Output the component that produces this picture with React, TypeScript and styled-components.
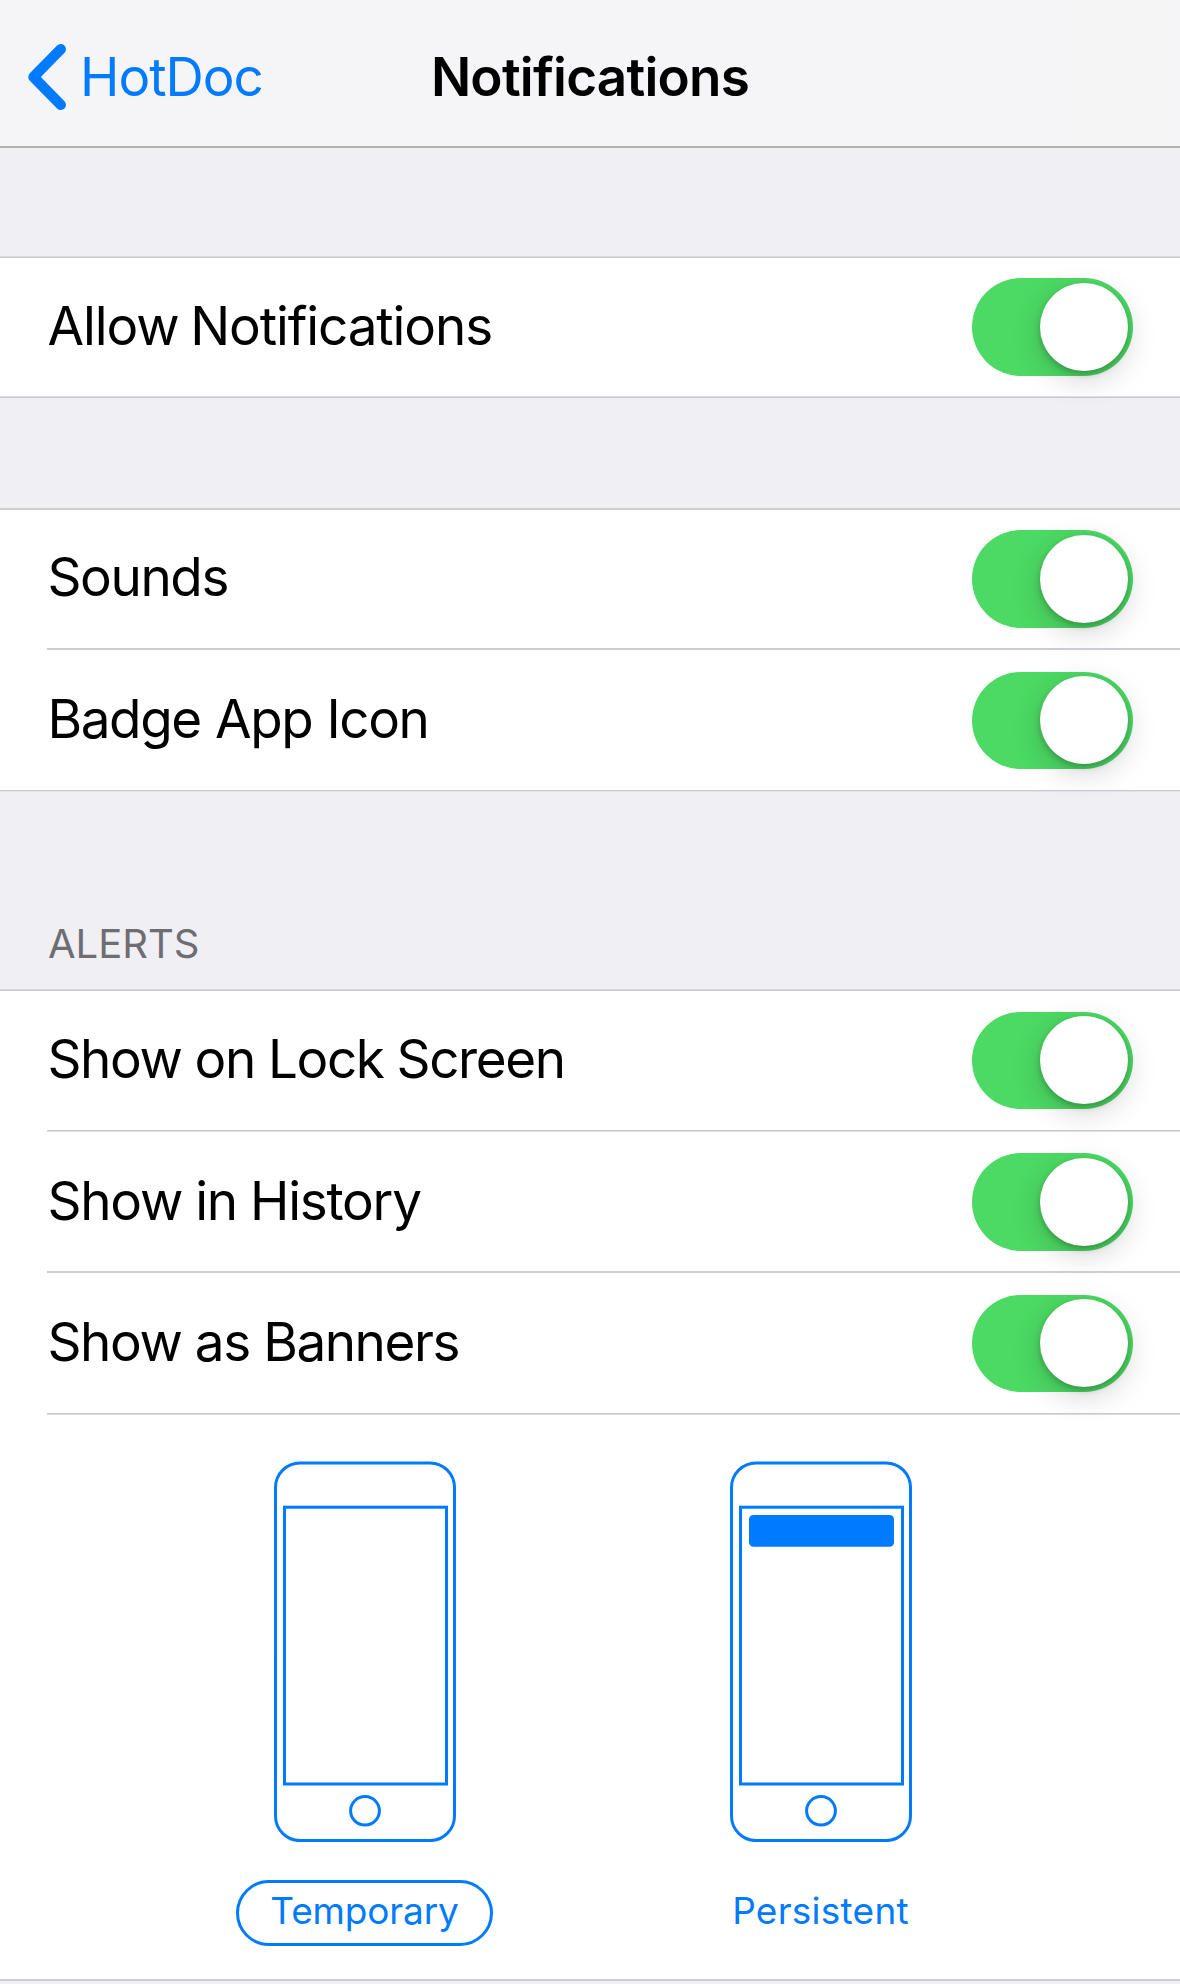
import React, { useState } from 'react';
import styled, { createGlobalStyle } from 'styled-components';

const blue = '#007aff';

const GlobalStyle = createGlobalStyle`
  body {
    margin: 0;
    background: #efeff4;
    font-family: Inter, Roboto, 'Liberation Sans', sans-serif;
    color: #000;
  }
`;

const Screen = styled.div`
  width: 1180px;
  height: 1984px;
  overflow: hidden;
  display: flex;
  flex-direction: column;
  background: #efeff4;
`;

const NavBar = styled.header`
  box-sizing: border-box;
  height: 148px;
  padding: 7px 28px 0;
  display: grid;
  grid-template-columns: 1fr auto 1fr;
  align-items: center;
  background: linear-gradient(90deg, #f5f5f7 0 1070px, #f5f5f5 1072px 1168px, #f5f5f7 1170px);
  border-bottom: 2px solid #b1b1b4;
`;

const BackLink = styled.a`
  display: flex;
  align-items: center;
  gap: 13px;
  color: ${blue};
  font-size: 53px;
  line-height: 64px;
  letter-spacing: -1px;
`;

const Title = styled.h1`
  margin: 0;
  font-size: 53px;
  font-weight: 600;
  line-height: 64px;
  letter-spacing: -0.76px;
`;

const Gap = styled.div<{ $height: number }>`
  height: ${(p) => p.$height}px;
`;

const SectionTitle = styled.h2`
  box-sizing: border-box;
  height: 197px;
  margin: 0;
  padding: 0 48px 21px;
  display: flex;
  align-items: flex-end;
  font-size: 40px;
  font-weight: 400;
  line-height: 48px;
  color: #6d6d72;
`;

const Group = styled.section`
  display: flex;
  flex-direction: column;
  background: #fff;
`;

/* Two-pixel hairline; each pixel row has its own shade. */
const Rule = styled.div<{ $inset?: boolean; $top?: string; $bottom?: string }>`
  height: 2px;
  margin-left: ${(p) => (p.$inset ? 47 : 0)}px;
  background: linear-gradient(
    ${(p) => p.$top ?? '#cecdd1'} 50%,
    ${(p) => p.$bottom ?? '#cecdd1'} 50%
  );
`;

const Row = styled.div<{ $height: number; $shift: number }>`
  box-sizing: border-box;
  height: ${(p) => p.$height}px;
  padding: ${(p) => p.$shift}px 47px 0 47.5px;
  display: flex;
  justify-content: space-between;
  align-items: flex-start;
`;

const RowLabel = styled.span<{ $tracking: number; $wordSpacing: number }>`
  font-size: 53px;
  line-height: 135px;
  letter-spacing: ${(p) => p.$tracking}px;
  word-spacing: ${(p) => p.$wordSpacing}px;
  white-space: nowrap;
`;

const Switch = styled.button<{ $on: boolean }>`
  box-sizing: border-box;
  width: 161px;
  height: 97.5px;
  margin: 19.7px 0 0;
  padding: 0 5px;
  border: 0;
  border-radius: 49px;
  display: flex;
  align-items: center;
  justify-content: ${(p) => (p.$on ? 'flex-end' : 'flex-start')};
  background: ${(p) => (p.$on ? '#4cd964' : '#e5e5ea')};
`;

const Knob = styled.span`
  width: 88px;
  height: 88px;
  border-radius: 50%;
  background: #fff;
  box-shadow: 0 3px 6px rgba(0, 0, 0, 0.22), 0 9px 30px rgba(0, 0, 0, 0.17);
`;

const BannerStyles = styled.div`
  box-sizing: border-box;
  height: 564px;
  padding: 46px 0 0 235px;
  display: grid;
  grid-template-columns: 259px 259px;
  column-gap: 197px;
  align-content: start;
`;

const StyleOption = styled.div`
  display: flex;
  flex-direction: column;
  gap: 38px;
`;

const PhoneFrame = styled.div`
  display: flex;
  padding-left: 39px;
`;

const StyleLabel = styled.span<{ $selected: boolean; $tracking: number }>`
  box-sizing: border-box;
  width: 257px;
  height: 66px;
  margin-left: 1px;
  border: 3px solid ${(p) => (p.$selected ? blue : 'transparent')};
  border-radius: 33px;
  text-align: center;
  font-size: 37px;
  line-height: 55px;
  letter-spacing: ${(p) => p.$tracking}px;
  color: ${blue};
`;

const Chevron = () => (
  <svg width="39" height="68" viewBox="0 0 39 68" fill="none">
    <path
      d="M32.8 6.2 5.5 34l27.3 27.8"
      stroke={blue}
      strokeWidth="10.4"
      strokeLinecap="round"
      strokeLinejoin="round"
    />
  </svg>
);

const Phone = ({ banner }: { banner?: boolean }) => (
  <svg width="182" height="381" viewBox="0 0 182 381" fill="none" stroke={blue} strokeWidth="3">
    <rect x="1.5" y="2" width="179" height="377.6" rx="24.5" />
    <rect x="10.5" y="46.2" width="162" height="276.8" />
    <ellipse cx="91" cy="349.8" rx="14.4" ry="14.2" />
    {banner && <rect x="19" y="54" width="145" height="31.7" rx="4.5" fill={blue} stroke="none" />}
  </svg>
);

type SettingProps = {
  label: string;
  height: number;
  shift: number;
  tracking: number;
  wordSpacing?: number;
};

const Setting = ({ label, height, shift, tracking, wordSpacing = 0 }: SettingProps) => {
  const [on, setOn] = useState(true);
  return (
    <Row $height={height} $shift={shift}>
      <RowLabel $tracking={tracking} $wordSpacing={wordSpacing}>{label}</RowLabel>
      <Switch $on={on} role="switch" aria-checked={on} aria-label={label} onClick={() => setOn(!on)}>
        <Knob />
      </Switch>
    </Row>
  );
};

export default function App() {
  return (
    <>
      <GlobalStyle />
      <Screen>
        <NavBar>
          <BackLink>
            <Chevron />
            HotDoc
          </BackLink>
          <Title>Notifications</Title>
        </NavBar>

        <Gap $height={108} />
        <Group>
          <Rule $top="#dddce1" $bottom="#c8c7cb" />
          <Setting label="Allow Notifications" height={138} shift={0.6} tracking={-1.1} wordSpacing={-2} />
          <Rule $top="#dedee0" $bottom="#c8c7cb" />
        </Group>

        <Gap $height={110} />
        <Group>
          <Rule />
          <Setting label="Sounds" height={138} shift={0.4} tracking={-1.4} />
          <Rule $inset />
          <Setting label="Badge App Icon" height={140} shift={2} tracking={-1.42} wordSpacing={0.8} />
          <Rule $top="#c8c7cc" $bottom="#e3e2e7" />
        </Group>

        <SectionTitle>ALERTS</SectionTitle>
        <Group>
          <Rule $top="#d6d5da" $bottom="#cbcacf" />
          <Setting label="Show on Lock Screen" height={139} shift={1} tracking={-1.4} wordSpacing={-0.4} />
          <Rule $inset $top="#c8c7cc" $bottom="#e0e0e4" />
          <Setting label="Show in History" height={139} shift={1.6} tracking={-1.26} wordSpacing={-0.4} />
          <Rule $inset />
          <Setting label="Show as Banners" height={140} shift={2} tracking={-1.43} />
          <Rule $inset $top="#c8c7cc" $bottom="#dcdcde" />
          <BannerStyles>
            <StyleOption>
              <PhoneFrame>
                <Phone />
              </PhoneFrame>
              <StyleLabel $selected $tracking={-0.17}>Temporary</StyleLabel>
            </StyleOption>
            <StyleOption>
              <PhoneFrame>
                <Phone banner />
              </PhoneFrame>
              <StyleLabel $selected={false} $tracking={0.25}>Persistent</StyleLabel>
            </StyleOption>
          </BannerStyles>
          <Rule />
        </Group>
      </Screen>
    </>
  );
}
